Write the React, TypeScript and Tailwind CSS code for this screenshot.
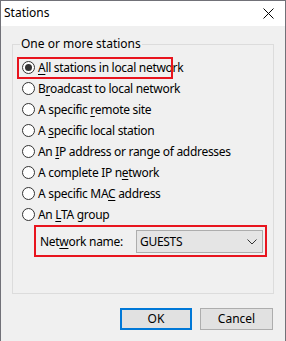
const options = [
  { pre: "", key: "A", post: "ll stations in local network" },
  { pre: "B", key: "r", post: "oadcast to local network" },
  { pre: "A specific ", key: "r", post: "emote site" },
  { pre: "A ", key: "s", post: "pecific local station" },
  { pre: "An ", key: "I", post: "P address or range of addresses" },
  { pre: "A complete IP n", key: "e", post: "twork" },
  { pre: "A specific MA", key: "C", post: " address" },
  { pre: "An ", key: "L", post: "TA group" },
];

function Radio({ checked }: { checked?: boolean }) {
  return (
    <span className="w-[13px] h-[13px] rounded-full border border-[#333333] bg-white flex items-center justify-center shrink-0">
      {checked && <span className="w-[7px] h-[7px] rounded-full bg-[#333333]" />}
    </span>
  );
}

export default function App() {
  return (
    <div
      className="w-[286px] h-[341px] bg-[#f0f0f0] border-x border-t border-[#717178] flex flex-col text-[12px] leading-[16px] text-black"
      style={{ fontFamily: '"Noto Sans", "Open Sans", sans-serif' }}
    >
      <div className="h-[25px] bg-white flex items-center justify-between pl-[3px] pr-[11px] shrink-0">
        <span className="text-[12px] -mt-[1px]">Stations</span>
        <svg width="11" height="11" viewBox="0 0 11 11" fill="none">
          <path d="M0.5 0.5 L10.5 10.5 M10.5 0.5 L0.5 10.5" stroke="#000" strokeWidth="1" />
        </svg>
      </div>

      <fieldset className="mx-[11px] mt-[10px] h-[258px] border border-[#dcdcdc] px-[4px]">
        <legend className="ml-[3px] px-[1px]">One or more stations</legend>
        <div className="flex flex-col mt-[5px]">
          {options.map((o, i) => (
            <div key={i} className="relative h-[21px] flex items-center pl-[5px] gap-[3px]">
              {i === 0 && (
                <div className="absolute left-0 top-[-0.5px] w-[156px] h-[22px] border-2 border-[#e8141e]" />
              )}
              <Radio checked={i === 0} />
              <span className="whitespace-nowrap tracking-[-0.3px]">
                {o.pre}
                <span className="underline underline-offset-2">{o.key}</span>
                {o.post}
              </span>
            </div>
          ))}
        </div>

        <div className="ml-[17px] mr-[2px] h-[32px] border-2 border-[#e8141e] flex items-center pl-[4px] pr-[2px]">
          <span className="w-[96px] tracking-[-0.3px] mt-[2px]">
            Net<span className="underline underline-offset-2">w</span>ork name:
          </span>
          <div className="flex-1 h-[23px] mt-[1px] bg-[#e5e5e5] border border-[#adadad] flex items-center justify-between pl-[3px] pr-[5px]">
            <span className="tracking-[-0.3px]">GUESTS</span>
            <svg width="10" height="6" viewBox="0 0 10 6" fill="none">
              <path d="M0.5 0.5 L5 5 L9.5 0.5" stroke="#333" strokeWidth="1" />
            </svg>
          </div>
        </div>
      </fieldset>

      <div className="flex justify-end gap-[8px] mr-[12px] mt-[14px]">
        <button className="w-[72px] h-[22px] bg-[#e1e1e1] border-2 border-[#0078d7] flex items-center justify-center">
          OK
        </button>
        <button className="w-[73px] h-[22px] bg-[#e1e1e1] border border-[#adadad] flex items-center justify-center">
          Cancel
        </button>
      </div>
    </div>
  );
}
